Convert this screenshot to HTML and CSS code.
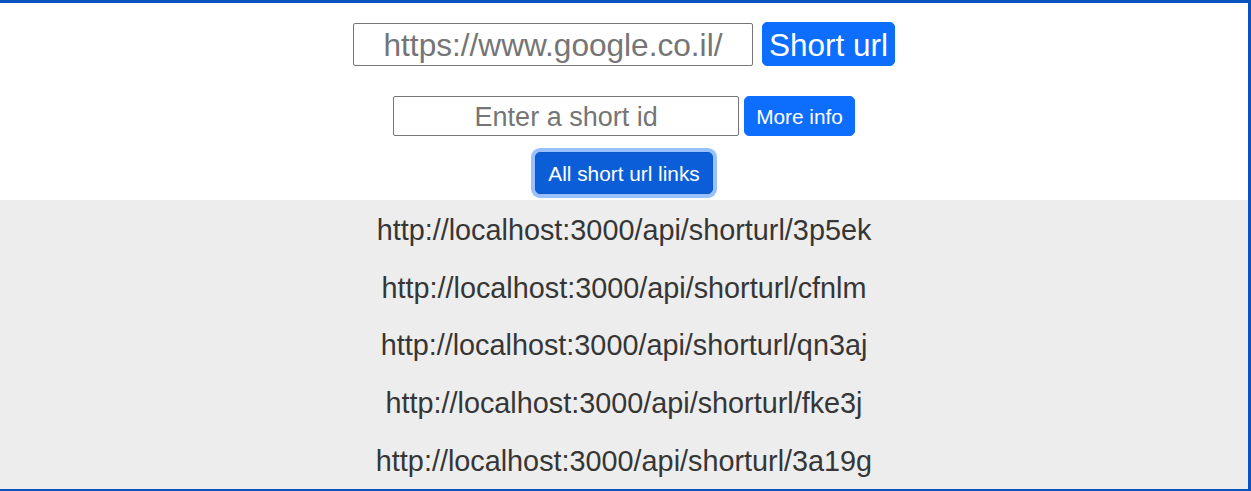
FILE: index.html
```html
<!DOCTYPE html>
<html lang="en">
<head>
<meta charset="utf-8">
<title>Short url</title>
<link rel="stylesheet" href="styles.css">
</head>
<body>
<div class="frame">
  <header class="controls">
    <form class="row row-url">
      <input class="field field-url" type="text" value="https://www.google.co.il/">
      <button class="btn btn-short" type="button">Short url</button>
    </form>
    <form class="row row-id">
      <input class="field field-id" type="text" placeholder="Enter a short id">
      <button class="btn btn-info" type="button">More info</button>
    </form>
    <div class="row row-all">
      <button class="btn btn-all" type="button">All short url links</button>
    </div>
  </header>
  <section class="links">
    <div class="link">http://localhost:3000/api/shorturl/3p5ek</div>
    <div class="link">http://localhost:3000/api/shorturl/cfnlm</div>
    <div class="link">http://localhost:3000/api/shorturl/qn3aj</div>
    <div class="link">http://localhost:3000/api/shorturl/fke3j</div>
    <div class="link">http://localhost:3000/api/shorturl/3a19g</div>
  </section>
</div>
</body>
</html>
```

FILE: styles.css
```css
html, body {
  margin: 0;
  padding: 0;
  background: #ffffff;
  font-family: "Liberation Sans", Arial, sans-serif;
}

.frame {
  height: 491px;
  box-sizing: border-box;
  border-top: 3px solid #0a53be;
  border-right: 3px solid #0a53be;
  border-bottom: 2px solid #0a53be;
  display: flex;
  flex-direction: column;
  overflow: hidden;
}

.controls {
  display: flex;
  flex-direction: column;
  align-items: center;
  padding: 19px 0 6px;
  background: #ffffff;
}

.row {
  display: flex;
  justify-content: center;
  margin: 0;
}

.row-url {
  align-items: flex-end;
  gap: 9px;
  height: 44px;
}

.row-id {
  align-items: center;
  gap: 5px;
  margin-top: 30px;
  height: 40px;
}

.row-all {
  margin-top: 16px;
  height: 42px;
}

.field {
  box-sizing: border-box;
  border: 1px solid #767676;
  border-radius: 2px;
  background: #ffffff;
  font-family: "Liberation Sans", Arial, sans-serif;
  text-align: center;
  color: #757575;
  padding: 0 4px;
  margin: 0;
  outline: none;
}

.field::placeholder {
  color: #757575;
  opacity: 1;
}

.field-url {
  width: 400px;
  height: 43px;
  font-size: 31.6px;
  padding-top: 1px;
}

.field-id {
  width: 346px;
  height: 40px;
  font-size: 27px;
  padding-top: 2px;
}

.btn {
  box-sizing: border-box;
  font-family: "Liberation Sans", Arial, sans-serif;
  color: #ffffff;
  background: #0d6efd;
  border: 1px solid #0d6efd;
  border-radius: 5px;
  margin: 0;
  cursor: pointer;
  line-height: 1;
}

.btn-short {
  height: 44px;
  font-size: 31.5px;
  padding: 3px 6px 0;
}

.btn-info {
  height: 40px;
  font-size: 20.8px;
  padding: 2px 11px 0;
}

.btn-all {
  height: 42px;
  font-size: 20.8px;
  padding: 2px 12px 0;
  background: #0b5ed7;
  border-color: #0a58ca;
  box-shadow: 0 0 0 4px rgba(49, 132, 253, 0.5);
}

.links {
  flex: 1;
  background: #ededed;
  display: flex;
  flex-direction: column;
  padding-top: 2px;
}

.link {
  text-align: center;
  font-size: 28.8px;
  line-height: 57.7px;
  color: #363636;
}
```
